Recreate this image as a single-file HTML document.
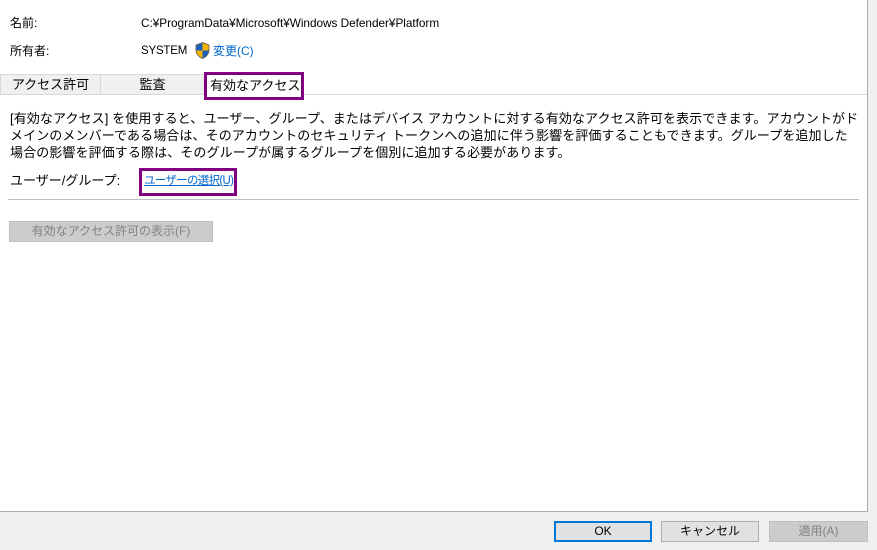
<!DOCTYPE html>
<html><head><meta charset="utf-8"><style>
body{margin:0;width:877px;height:550px;background:#f0f0f0;position:relative;overflow:hidden;font-family:"Liberation Sans","Noto Sans CJK JP",sans-serif;font-size:12px;color:#000}
.p{position:absolute;left:0;top:0;width:868px;height:512px;background:#fff;border-right:1px solid #adadad;border-bottom:1px solid #adadad;box-sizing:border-box}
.a{position:absolute;white-space:nowrap;line-height:16px}
.tab{position:absolute;top:74px;height:21px;background:#f0f0f0;border:1px solid #d9d9d9;box-sizing:border-box;text-align:center;line-height:19px;font-size:13px}
.btn{position:absolute;top:521px;height:21px;box-sizing:border-box;border:1px solid #adadad;background:#e1e1e1;text-align:center;line-height:19px}
</style></head><body>
<div class="p"></div>
<div class="a" style="left:10px;top:15px">名前:</div>
<div class="a" style="left:141px;top:15px;font-size:11.8px;letter-spacing:-0.03px">C:¥ProgramData¥Microsoft¥Windows Defender¥Platform</div>
<div class="a" style="left:10px;top:43px">所有者:</div>
<div class="a" style="left:141px;top:43px;font-size:11.5px;letter-spacing:-0.2px">SYSTEM</div>
<svg style="position:absolute;left:195px;top:42px" width="15" height="17" viewBox="0 0 15 17"><path d="M7.5 0.5 L14 3 V8 C14 12 11 15 7.5 16.5 C4 15 1 12 1 8 V3 Z" fill="#f5b400" stroke="#555" stroke-width="0.8"/><path d="M7.5 1 V8.5 H1.3 V3.3 Z" fill="#1e5fb8"/><path d="M7.5 8.5 H13.7 C13.5 12 11 14.8 7.5 16 Z" fill="#1e5fb8"/></svg>
<div class="a" style="left:213px;top:43px;color:#0066cc">変更(C)</div>
<div style="position:absolute;left:0;top:94px;width:867px;height:1px;background:#d9d9d9"></div>
<div class="tab" style="left:0;width:101px">アクセス許可</div>
<div class="tab" style="left:100px;width:105px">監査</div>
<div class="tab" style="left:204px;top:72px;width:100px;height:28px;background:#fff;border:3px solid #800080;line-height:22px;text-align:left;padding-left:3px">有効なアクセス</div>
<div class="a" style="left:10px;top:110px;line-height:17px;font-size:13px;letter-spacing:0.1px">[有効なアクセス] を使用すると、ユーザー、グループ、またはデバイス アカウントに対する有効なアクセス許可を表示できます。アカウントがド<br>メインのメンバーである場合は、そのアカウントのセキュリティ トークンへの追加に伴う影響を評価することもできます。グループを追加した<br>場合の影響を評価する際は、そのグループが属するグループを個別に追加する必要があります。</div>
<div class="a" style="left:10px;top:173px;font-size:13px">ユーザー/グループ:</div>
<div style="position:absolute;left:139px;top:168px;width:98px;height:28px;border:3px solid #800080;box-sizing:border-box"></div>
<div class="a" style="left:144px;top:173px;color:#0066cc;text-decoration:underline;font-size:11.5px;letter-spacing:-0.7px">ユーザーの選択(U)</div>
<div style="position:absolute;left:8px;top:199px;width:851px;height:1px;background:#c0c0c0"></div>
<div class="btn" style="left:9px;top:221px;width:204px;background:#cccccc;border-color:#bfbfbf;color:#838383">有効なアクセス許可の表示(F)</div>
<div class="btn" style="left:554px;width:98px;border:2px solid #0078d7;line-height:17px">OK</div>
<div class="btn" style="left:661px;width:98px">キャンセル</div>
<div class="btn" style="left:769px;width:99px;background:#cccccc;border-color:#bfbfbf;color:#838383">適用(A)</div>
</body></html>
